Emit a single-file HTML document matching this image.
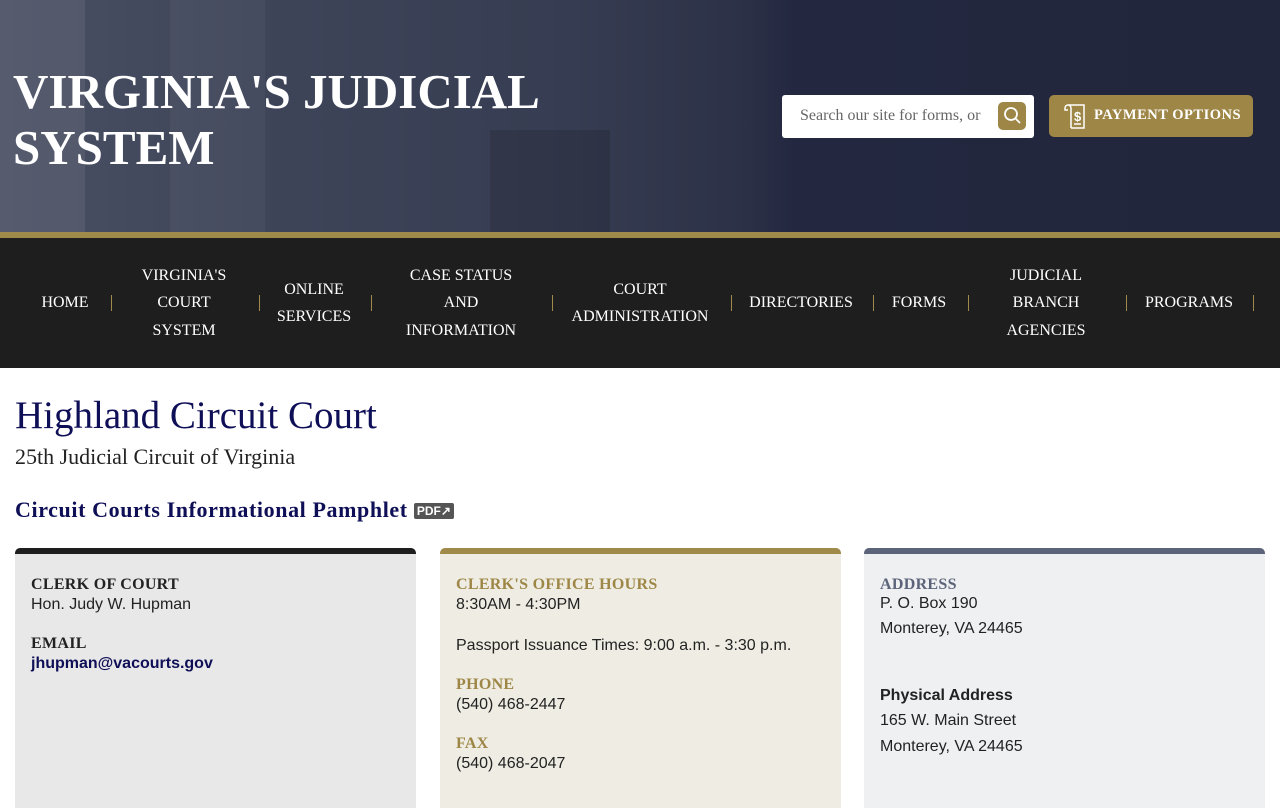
<!DOCTYPE html>
<html><head><meta charset="utf-8"><style>
*{margin:0;padding:0;box-sizing:border-box}
body{width:1280px;height:800px;overflow:hidden;background:#fff;font-family:"Liberation Serif",serif}
.hdr{position:absolute;left:0;top:0;width:1280px;height:232px;background:linear-gradient(90deg,#4a5063 0%,#3f4559 20%,#363c51 45%,#2c3147 58%,#232840 62%,#21263c 100%)}
.col{position:absolute;top:0;height:232px;background:rgba(255,255,255,.06)}
.title{position:absolute;left:13px;top:64px;color:#fff;font-weight:bold;font-size:49px;line-height:56px}
.search{position:absolute;left:782px;top:95px;width:252px;height:43px;background:#fff;border-radius:3px}
.search span{position:absolute;left:18px;top:12px;font-size:16px;color:#666;white-space:nowrap;width:184px;overflow:hidden}
.sbtn{position:absolute;left:216px;top:7px;width:28px;height:28px;background:#9d8646;border-radius:5px}
.pay{position:absolute;left:1049px;top:95px;width:204px;height:42px;background:#9d8646;border-radius:5px;color:#fff;font-weight:bold;font-size:14.5px}
.pay span{position:absolute;left:45px;top:12px;letter-spacing:.5px}
.gold{position:absolute;top:232px;left:0;width:1280px;height:6px;background:#a08a4a}
.nav{position:absolute;top:238px;left:0;width:1280px;height:130px;background:#1e1e1e}
.nav div{position:absolute;color:#fff;font-size:16px;line-height:27.5px;text-align:center;transform:translateX(-50%);top:0;height:130px;display:flex;align-items:center;white-space:nowrap}
.sep{position:absolute;top:57px;width:1px;height:16px;background:#a08a4a}
h1{position:absolute;left:15px;top:393px;font-size:39px;font-weight:normal;color:#0f0f57}
.sub{position:absolute;left:15px;top:444px;font-size:22px;color:#222}
.pam{position:absolute;left:15px;top:497px;font-size:22px;font-weight:bold;color:#0f0f57;letter-spacing:.6px}
.pdf{display:inline-block;background:#555;color:#fff;font-family:"Liberation Sans",sans-serif;font-size:12px;padding:1px 3px;border-radius:2px;vertical-align:2px;font-weight:bold;letter-spacing:0}
.card{position:absolute;top:548px;width:401px;height:260px;border-top:6px solid;border-radius:5px 5px 0 0;padding:22px 16px}
.card h4{font-size:16px;font-weight:bold;margin:0;letter-spacing:.3px}
.card p{font-family:"Liberation Sans",sans-serif;font-size:16px;color:#222;line-height:21px}
.g{height:20px}
</style></head><body>
<div class="hdr"></div>
<div class="col" style="left:0;width:85px;background:rgba(255,255,255,.07)"></div>
<div class="col" style="left:170px;width:95px;background:rgba(255,255,255,.04)"></div>
<div class="col" style="left:490px;top:130px;height:102px;width:120px;background:rgba(0,0,0,.12)"></div>
<div class="title">VIRGINIA'S JUDICIAL<br>SYSTEM</div>
<div class="search"><span>Search our site for forms, or</span><div class="sbtn"><svg width="28" height="28"><circle cx="13" cy="12" r="6" stroke="#fff" stroke-width="1.8" fill="none"/><line x1="17.5" y1="16.5" x2="22" y2="21" stroke="#fff" stroke-width="1.8"/></svg></div></div>
<div class="pay"><svg style="position:absolute;left:13px;top:7px" width="28" height="29"><path d="M6 3h16v23H9M6 3a3 3 0 0 0-3 3v2h3M6 3a3 3 0 0 1 3 3v20" stroke="#fff" stroke-width="1.5" fill="none"/><text x="12" y="19" fill="#fff" font-size="13" font-family="Liberation Sans">$</text><line x1="12" y1="22" x2="19" y2="22" stroke="#fff" stroke-width="1.5"/></svg><span>PAYMENT OPTIONS</span></div>
<div class="gold"></div>
<div class="nav">
<div style="left:65px">HOME</div><i class="sep" style="left:111px"></i>
<div style="left:184px">VIRGINIA'S<br>COURT<br>SYSTEM</div><i class="sep" style="left:259px"></i>
<div style="left:314px">ONLINE<br>SERVICES</div><i class="sep" style="left:371px"></i>
<div style="left:461px">CASE STATUS<br>AND<br>INFORMATION</div><i class="sep" style="left:552px"></i>
<div style="left:640px">COURT<br>ADMINISTRATION</div><i class="sep" style="left:731px"></i>
<div style="left:801px">DIRECTORIES</div><i class="sep" style="left:873px"></i>
<div style="left:919px">FORMS</div><i class="sep" style="left:968px"></i>
<div style="left:1046px">JUDICIAL<br>BRANCH<br>AGENCIES</div><i class="sep" style="left:1126px"></i>
<div style="left:1189px">PROGRAMS</div><i class="sep" style="left:1253px"></i>
</div>
<h1>Highland Circuit Court</h1>
<div class="sub">25th Judicial Circuit of Virginia</div>
<div class="pam">Circuit Courts Informational Pamphlet <span class="pdf">PDF↗</span></div>
<div class="card" style="left:15px;background:#e8e8e8;border-color:#1e1e1e">
<h4 style="color:#222">CLERK OF COURT</h4><p>Hon. Judy W. Hupman</p><div class="g"></div>
<h4 style="color:#222">EMAIL</h4><p style="color:#0f0f57;font-weight:bold">jhupman@vacourts.gov</p></div>
<div class="card" style="left:440px;background:#efede3;border-color:#a08a4a">
<h4 style="color:#9d8646">CLERK'S OFFICE HOURS</h4><p>8:30AM - 4:30PM</p><div class="g"></div><p>Passport Issuance Times: 9:00 a.m. - 3:30 p.m.</p><div class="g"></div>
<h4 style="color:#9d8646">PHONE</h4><p>(540) 468-2447</p><div class="g"></div>
<h4 style="color:#9d8646">FAX</h4><p>(540) 468-2047</p></div>
<div class="card" style="left:864px;background:#eff0f2;border-color:#5c6479">
<h4 style="color:#5c6479">ADDRESS</h4><p style="line-height:25px;margin-top:-3px">P. O. Box 190<br>Monterey, VA 24465</p><div style="height:42px"></div>
<p style="font-weight:bold;line-height:25px">Physical Address</p><p style="line-height:26px">165 W. Main Street<br>Monterey, VA 24465</p></div>
</body></html>
